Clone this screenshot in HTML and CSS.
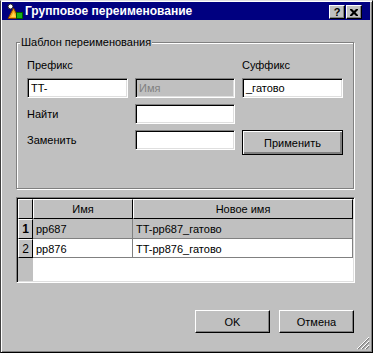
FILE: index.html
```html
<!DOCTYPE html>
<html lang="ru">
<head>
<meta charset="utf-8">
<title>Групповое переименование</title>
<link rel="stylesheet" href="styles.css">
</head>
<body>
<div class="window">
  <div class="titlebar">
    <svg class="app-icon" width="16" height="16" viewBox="0 0 16 16">
      <polygon points="1,15.5 6.5,5 12,15.5" fill="#f7a21b" stroke="#7a3c00" stroke-width="1"/>
      <polygon points="4,14 6.5,9 9,14" fill="#ffd84a"/>
      <rect x="9.5" y="9.5" width="6" height="6" fill="#19b319" stroke="#005a00" stroke-width="1"/>
      <circle cx="3.5" cy="3.5" r="2.5" fill="#ffffff" stroke="#202020" stroke-width="1"/>
    </svg>
    <span class="title">Групповое переименование</span>
    <div class="caption-btns">
      <span class="cap-btn help">?</span>
      <span class="cap-btn close">
        <svg width="8" height="7" viewBox="0 0 8 7">
          <path d="M0 0h2l2 2 2-2h2v1l-2.5 2.5L8 6v1H6L4 5 2 7H0V6l2.5-2.5L0 1z" fill="#000"/>
        </svg>
      </span>
    </div>
  </div>

  <div class="content">
    <fieldset class="group">
      <legend>Шаблон переименования</legend>
      <div class="form-grid">
        <span class="lbl col1">Префикс</span>
        <span class="lbl col3">Суффикс</span>
        <div class="field col1">TT-</div>
        <div class="field disabled col2">Имя</div>
        <div class="field col3">_гатово</div>
        <span class="lbl col1 mid">Найти</span>
        <div class="field col2"></div>
        <span class="lbl col1 mid">Заменить</span>
        <div class="field col2"></div>
        <button class="btn default col3 apply">Применить</button>
      </div>
    </fieldset>

    <div class="grid-table">
      <div class="row head">
        <div class="hcell corner"></div>
        <div class="hcell c-name">Имя</div>
        <div class="hcell c-new">Новое имя</div>
      </div>
      <div class="row data current">
        <div class="rowhead bold">1</div>
        <div class="cell c-name">pp687</div>
        <div class="cell c-new">TT-pp687_гатово</div>
      </div>
      <div class="row data short">
        <div class="rowhead">2</div>
        <div class="cell c-name">pp876</div>
        <div class="cell c-new">TT-pp876_гатово</div>
      </div>
    </div>

    <div class="footer">
      <button class="btn">OK</button>
      <button class="btn">Отмена</button>
    </div>
  </div>

  <svg class="grip" width="13" height="13" viewBox="0 0 13 13">
    <path d="M12 1L1 12M12 5L5 12M12 9L9 12" stroke="#808080" stroke-width="1.4" fill="none"/>
    <path d="M12 0L0 12M12 4L4 12M12 8L8 12" stroke="#ffffff" stroke-width="1" fill="none"/>
  </svg>
</div>
</body>
</html>
```

FILE: styles.css
```css
* { box-sizing: border-box; }

html, body {
  margin: 0;
  padding: 0;
  background: #c0c0c0;
}

body {
  font-family: "Liberation Sans", Arial, sans-serif;
  font-size: 11px;
  line-height: 13px;
  color: #000;
}

.window {
  position: relative;
  width: 373px;
  height: 353px;
  background: #c0c0c0;
  border-style: solid;
  border-width: 1px;
  border-color: #dfdfdf #000 #000 #404040;
  box-shadow: inset 1px 1px 0 #fff, inset -1px -1px 0 #808080;
  padding: 1px 2px 2px 1px;
  display: flex;
  flex-direction: column;
}

/* ---------- title bar ---------- */
.titlebar {
  height: 18px;
  background: #000080;
  display: flex;
  align-items: center;
  padding-left: 5px;
  padding-right: 8px;
}

.app-icon {
  flex: none;
  margin-right: 2px;
}

.title {
  color: #fff;
  font-weight: bold;
  font-size: 12px;
  flex: 1;
  white-space: nowrap;
}

.caption-btns {
  display: flex;
  gap: 1px;
  align-self: flex-end;
  padding-bottom: 1px;
}

.cap-btn {
  width: 16px;
  height: 14px;
  background: #c0c0c0;
  border-style: solid;
  border-width: 1px;
  border-color: #fff #000 #000 #fff;
  box-shadow: inset -1px -1px 0 #808080;
  display: flex;
  align-items: center;
  justify-content: center;
  font-weight: bold;
  font-size: 11px;
  line-height: 11px;
}

/* ---------- content ---------- */
.content {
  flex: 1;
  padding: 0 16px 0 14px;
  display: flex;
  flex-direction: column;
}

.group {
  margin: 16px 0 0 0;
  width: 338px;
  border: 1px solid #808080;
  box-shadow: inset 1px 1px 0 #fff, 1px 1px 0 #fff;
  padding: 10px 0 7px 10px;
}

.group legend {
  padding: 0 1px;
  margin-left: -7px;
  background: #c0c0c0;
  line-height: 13px;
}

.form-grid {
  display: grid;
  grid-template-columns: 101px 100px 101px;
  grid-template-rows: 13px 20px 20px 20px 25px;
  column-gap: 7px;
  row-gap: 6px;
}

.col1 { grid-column: 1; }
.col2 { grid-column: 2; }
.col3 { grid-column: 3; }

.lbl {
  white-space: nowrap;
}

.lbl.mid {
  align-self: center;
}

.field {
  height: 20px;
  background: #fff;
  border-style: solid;
  border-width: 1px;
  border-color: #808080 #fff #fff #808080;
  box-shadow: inset 1px 1px 0 #000, inset -1px -1px 0 #dfdfdf;
  padding: 3px 3px 0 3px;
  white-space: nowrap;
}

.field.disabled {
  background: #c0c0c0;
  color: #808080;
}

.btn {
  font-family: "Liberation Sans", Arial, sans-serif;
  font-size: 11px;
  color: #000;
  width: 75px;
  height: 23px;
  background: #c0c0c0;
  border-style: solid;
  border-width: 1px;
  border-color: #fff #000 #000 #fff;
  box-shadow: inset -1px -1px 0 #808080;
  padding: 0;
  margin: 0;
}

.btn.default {
  border-color: #000;
  box-shadow: inset 1px 1px 0 #fff, inset -1px -1px 0 #808080, inset -2px -2px 0 #808080;
}

.apply {
  width: 101px;
  height: 25px;
}

/* ---------- grid table ---------- */
.grid-table {
  margin-top: 8px;
  margin-right: -1px;
  width: 339px;
  height: 86px;
  border-style: solid;
  border-width: 1px;
  border-color: #808080 #fff #fff #808080;
  box-shadow: inset 1px 1px 0 #000, inset -1px -1px 0 #dfdfdf;
  padding: 1px;
  background: linear-gradient(to right, transparent 0, transparent 1px, #c0c0c0 1px, #c0c0c0 16px, #fff 16px);
  background-clip: padding-box;
}

.row {
  display: grid;
  grid-template-columns: 15px 100px 220px;
}

.row.head { height: 20px; }
.row.data { height: 20px; }
.row.data.short { height: 19px; }

.hcell {
  background: #c0c0c0;
  border-style: solid;
  border-width: 1px;
  border-color: #fff #000 #000 #fff;
  text-align: center;
  padding-top: 3px;
  white-space: nowrap;
}

.rowhead {
  background: #c0c0c0;
  border-style: solid;
  border-width: 1px;
  border-color: #fff #000 #000 #fff;
  text-align: center;
  padding-top: 3px;
  font-size: 12px;
}

.rowhead.bold {
  font-weight: bold;
}

.cell {
  background: #fff;
  border-right: 1px solid #808080;
  border-bottom: 1px solid #808080;
  padding: 4px 0 0 3px;
  white-space: nowrap;
}

.row.current .cell {
  background: #c0c0c0;
}

/* ---------- footer ---------- */
.footer {
  margin-top: 27px;
  display: flex;
  justify-content: flex-end;
  gap: 9px;
}

.grip {
  position: absolute;
  right: 2px;
  bottom: 2px;
}
```
